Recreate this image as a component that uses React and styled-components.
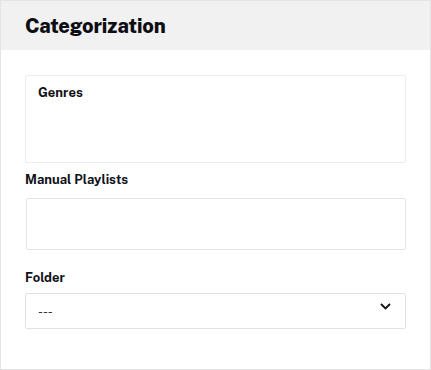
import React from "react";
import styled, { createGlobalStyle } from "styled-components";

const Global = createGlobalStyle`
  html, body { margin: 0; padding: 0; background: #fff; }
  body { font-family: "Public Sans", Inter, "Liberation Sans", sans-serif; color: #111118; }
  * { box-sizing: border-box; }
`;

const Panel = styled.section`
  width: 431px;
  height: 370px;
  border: 1px solid #e4e4e4;
  background: #fff;
  display: flex;
  flex-direction: column;
`;

const Header = styled.header`
  height: 49px;
  background: #f1f1f1;
  display: flex;
  align-items: center;
  padding: 1px 24px 0;
`;

const Title = styled.h2`
  margin: 0;
  font-size: 20px;
  font-weight: 800;
  letter-spacing: -0.1px;
  color: #0d0d14;
`;

const Body = styled.div`
  padding: 25px 24px 0;
  display: flex;
  flex-direction: column;
`;

const Fieldset = styled.div`
  border: 1px solid #ececec;
  border-radius: 2px;
  height: 88px;
  padding: 9px 12px;
`;

const Label = styled.div`
  font-size: 13px;
  font-weight: 700;
  color: #111118;
  line-height: 16px;
  margin-top: ${(p) => p.$mt || 0}px;
  margin-bottom: ${(p) => p.$mb || 0}px;
`;

const TextBox = styled.div`
  margin-left: 1px;
  height: 52px;
  border: 1px solid #e4e4e4;
  border-radius: 2px;
`;

const Select = styled.div`
  height: 36px;
  border: 1px solid #e2e2e2;
  border-radius: 2px;
  display: flex;
  align-items: center;
  justify-content: space-between;
  padding: 0 14px 0 12px;
  font-size: 13px;
  color: #333;
`;

const Chevron = () => (
  <svg width="11" height="7" viewBox="0 0 11 7" style={{ marginTop: -9 }}>
    <path d="M1 1l4.5 4.5L10 1" fill="none" stroke="#111" strokeWidth="1.8" />
  </svg>
);

export default function App() {
  return (
    <>
      <Global />
      <Panel>
        <Header>
          <Title>Categorization</Title>
        </Header>
        <Body>
          <Fieldset>
            <Label>Genres</Label>
          </Fieldset>
          <Label $mt={9} $mb={10}>Manual Playlists</Label>
          <TextBox />
          <Label $mt={20} $mb={7}>Folder</Label>
          <Select>
            <span>---</span>
            <Chevron />
          </Select>
        </Body>
      </Panel>
    </>
  );
}
